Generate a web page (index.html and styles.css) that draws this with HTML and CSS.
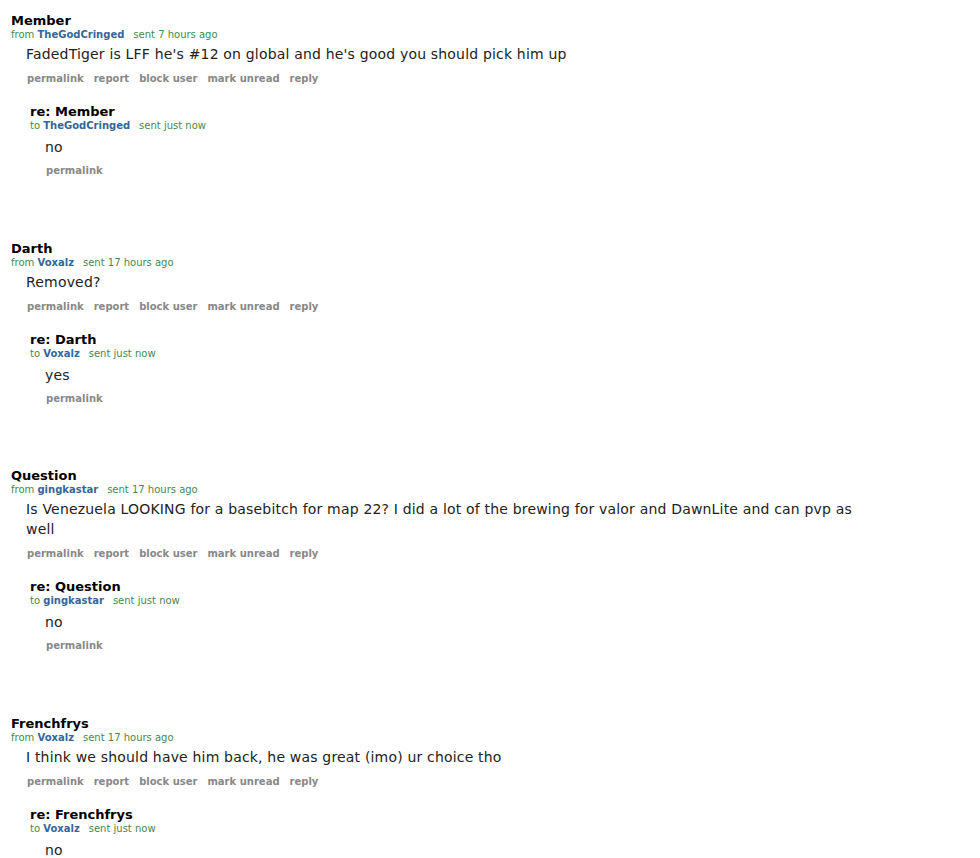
FILE: index.html
```html
<!DOCTYPE html>
<html>
<head>
<meta charset="utf-8">
<link rel="stylesheet" href="styles.css">
</head>
<body>
<div class="inbox">

  <div class="message">
    <div class="subject">Member</div>
    <div class="tagline">from <a class="author">TheGodCringed</a><span class="time">sent 7 hours ago</span></div>
    <div class="md">FadedTiger is LFF he's #12 on global and he's good you should pick him up</div>
    <ul class="buttons"><li>permalink</li><li>report</li><li>block user</li><li>mark unread</li><li>reply</li></ul>
    <div class="child">
      <div class="subject">re: Member</div>
      <div class="tagline">to <a class="author">TheGodCringed</a><span class="time">sent just now</span></div>
      <div class="md">no</div>
      <ul class="buttons"><li>permalink</li></ul>
    </div>
  </div>

  <div class="message">
    <div class="subject">Darth</div>
    <div class="tagline">from <a class="author">Voxalz</a><span class="time">sent 17 hours ago</span></div>
    <div class="md">Removed?</div>
    <ul class="buttons"><li>permalink</li><li>report</li><li>block user</li><li>mark unread</li><li>reply</li></ul>
    <div class="child">
      <div class="subject">re: Darth</div>
      <div class="tagline">to <a class="author">Voxalz</a><span class="time">sent just now</span></div>
      <div class="md">yes</div>
      <ul class="buttons"><li>permalink</li></ul>
    </div>
  </div>

  <div class="message">
    <div class="subject">Question</div>
    <div class="tagline">from <a class="author">gingkastar</a><span class="time">sent 17 hours ago</span></div>
    <div class="md">Is Venezuela LOOKING for a basebitch for map 22? I did a lot of the brewing for valor and DawnLite and can pvp as well</div>
    <ul class="buttons"><li>permalink</li><li>report</li><li>block user</li><li>mark unread</li><li>reply</li></ul>
    <div class="child">
      <div class="subject">re: Question</div>
      <div class="tagline">to <a class="author">gingkastar</a><span class="time">sent just now</span></div>
      <div class="md">no</div>
      <ul class="buttons"><li>permalink</li></ul>
    </div>
  </div>

  <div class="message">
    <div class="subject">Frenchfrys</div>
    <div class="tagline">from <a class="author">Voxalz</a><span class="time">sent 17 hours ago</span></div>
    <div class="md">I think we should have him back, he was great (imo) ur choice tho</div>
    <ul class="buttons"><li>permalink</li><li>report</li><li>block user</li><li>mark unread</li><li>reply</li></ul>
    <div class="child">
      <div class="subject">re: Frenchfrys</div>
      <div class="tagline">to <a class="author">Voxalz</a><span class="time">sent just now</span></div>
      <div class="md">no</div>
      <ul class="buttons"><li>permalink</li></ul>
    </div>
  </div>

</div>
</body>
</html>
```

FILE: styles.css
```css
html, body {
  margin: 0;
  padding: 0;
  background: #ffffff;
}

body {
  font-family: "DejaVu Sans", Verdana, sans-serif;
  color: #222222;
  overflow: hidden;
}

.inbox {
  padding: 13px 0 0 11px;
}

.message {
  margin-bottom: 63.5px;
}

.subject {
  font-size: 13px;
  font-weight: bold;
  line-height: 16px;
  color: #000000;
}

.tagline {
  font-size: 10px;
  line-height: 12px;
  color: #3f8a4f;
}

.author {
  color: #336699;
  font-weight: bold;
}

.time {
  margin-left: 9px;
}

.md {
  font-size: 14px;
  line-height: 20px;
  letter-spacing: 0.18px;
  color: #222222;
  margin: 3px 0 0 15px;
  max-width: 850px;
}

.buttons {
  list-style: none;
  margin: 9px 0 0 16px;
  padding: 0;
  display: flex;
  gap: 10px;
  font-size: 10px;
  line-height: 12px;
  font-weight: bold;
  color: #888888;
}

.child {
  margin: 19px 0 0 19px;
}

.child .md {
  margin-top: 5px;
}

.child .buttons {
  margin-top: 8px;
}
```
